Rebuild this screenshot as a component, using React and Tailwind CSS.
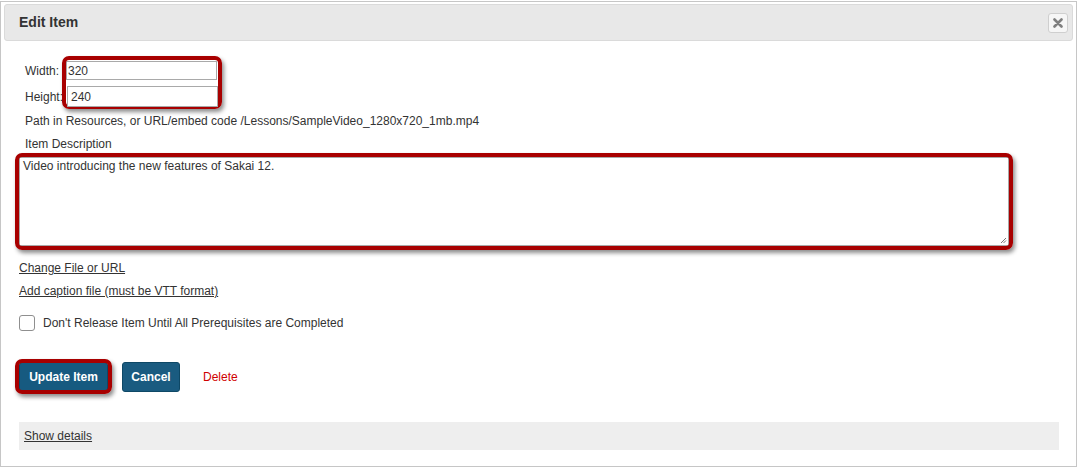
import React from 'react';

export default function App() {
  const font = { fontFamily: '"Liberation Sans", Arial, sans-serif' };
  const mark = 'absolute border-[4px] border-[#a80000] rounded-[7px] shadow-[2px_3px_4px_rgba(0,0,0,0.45)] pointer-events-none';

  return (
    <div className="pt-[1px] bg-white" style={font}>
      <div className="relative w-[1077px] h-[466px] border border-[#c6c6c6] bg-white text-[12px] text-[#333]">
        {/* Header */}
        <div className="mt-[2px] mx-[3px] h-[37px] bg-[#e8e8e8] border border-[#dadada] rounded-[3px] flex items-center justify-between pl-[14px] pr-[4px]">
          <span className="text-[14px] font-bold text-[#333]">Edit Item</span>
          <button className="w-[20px] h-[20px] bg-[#f6f6f6] border border-[#cfcfcf] rounded-[3px] flex items-center justify-center">
            <svg width="10" height="10" viewBox="0 0 10 10">
              <path d="M1.5 1.5 L8.5 8.5 M8.5 1.5 L1.5 8.5" stroke="#7f7f7f" strokeWidth="2.6" strokeLinecap="round" />
            </svg>
          </button>
        </div>

        {/* Body */}
        <div className="relative pl-[18px] pr-[66px] flex flex-col">
          <div className={mark + ' left-[61px] top-[15px] w-[160px] h-[53px]'}></div>

          <div className="mt-[20px] pl-[6px] flex items-center h-[19px]">
            <span className="w-[41px]">Width:</span>
            <div className="w-[151px] h-[19px] border border-[#a9a9a9] bg-white flex items-center px-[1px] leading-none">320</div>
          </div>
          <div className="mt-[6px] pl-[6px] flex items-center h-[21px]">
            <span className="w-[42px] whitespace-nowrap">Height:</span>
            <div className="relative w-[151px] h-[21px] border border-[#a9a9a9] bg-white flex items-center px-[3px] leading-none">240</div>
          </div>

          <div className="mt-[7px] pl-[6px] leading-[14px] whitespace-nowrap">
            Path in Resources, or URL/embed code /Lessons/SampleVideo_1280x720_1mb.mp4
          </div>
          <div className="mt-[9px] pl-[6px] leading-[14px]">Item Description</div>

          <div className="relative mt-[6px]">
            <div className="w-[990px] h-[89px] border border-[#a9a9a9] bg-white pl-[3px] pt-[1px] leading-[14px]">
              Video introducing the new features of Sakai 12.
            </div>
            <svg className="absolute left-[981px] top-[80px]" width="7" height="7" viewBox="0 0 7 7">
              <path d="M6 1 L1 6 M6 3.5 L3.5 6" stroke="#777" strokeWidth="1" />
            </svg>
            <div className={mark + ' -left-[4px] -top-[4px] w-[998px] h-[97px]'}></div>
          </div>

          <a href="#" className="mt-[15px] leading-[14px] underline text-[#333] self-start">Change File or URL</a>
          <a href="#" className="mt-[9px] leading-[14px] underline text-[#333] self-start">Add caption file (must be VTT format)</a>

          <div className="mt-[16px] flex items-center gap-[8px]">
            <span className="w-[16px] h-[16px] border border-[#8f8f8f] rounded-[3px] bg-white"></span>
            <span>Don't Release Item Until All Prerequisites are Completed</span>
          </div>

          <div className="mt-[30px] flex items-center">
            <div className="relative">
              <button className="w-[89px] h-[30px] bg-[#165a80] border border-[#0e4866] rounded-[3px] text-white font-bold text-[12px]">Update Item</button>
              <div className={mark + ' -left-[4px] -top-[3px] w-[97px] h-[35px]'}></div>
            </div>
            <button className="ml-[14px] w-[58px] h-[30px] bg-[#1a5b80] border border-[#0e4866] rounded-[3px] text-white font-bold text-[12px]">Cancel</button>
            <a href="#" className="ml-[23px] text-[#d00000]">Delete</a>
          </div>

          <div className="mt-[30px] w-[1040px] h-[28px] bg-[#eeeeee] flex items-center pl-[5px]">
            <a href="#" className="underline text-[#333]">Show details</a>
          </div>
        </div>
      </div>
    </div>
  );
}
